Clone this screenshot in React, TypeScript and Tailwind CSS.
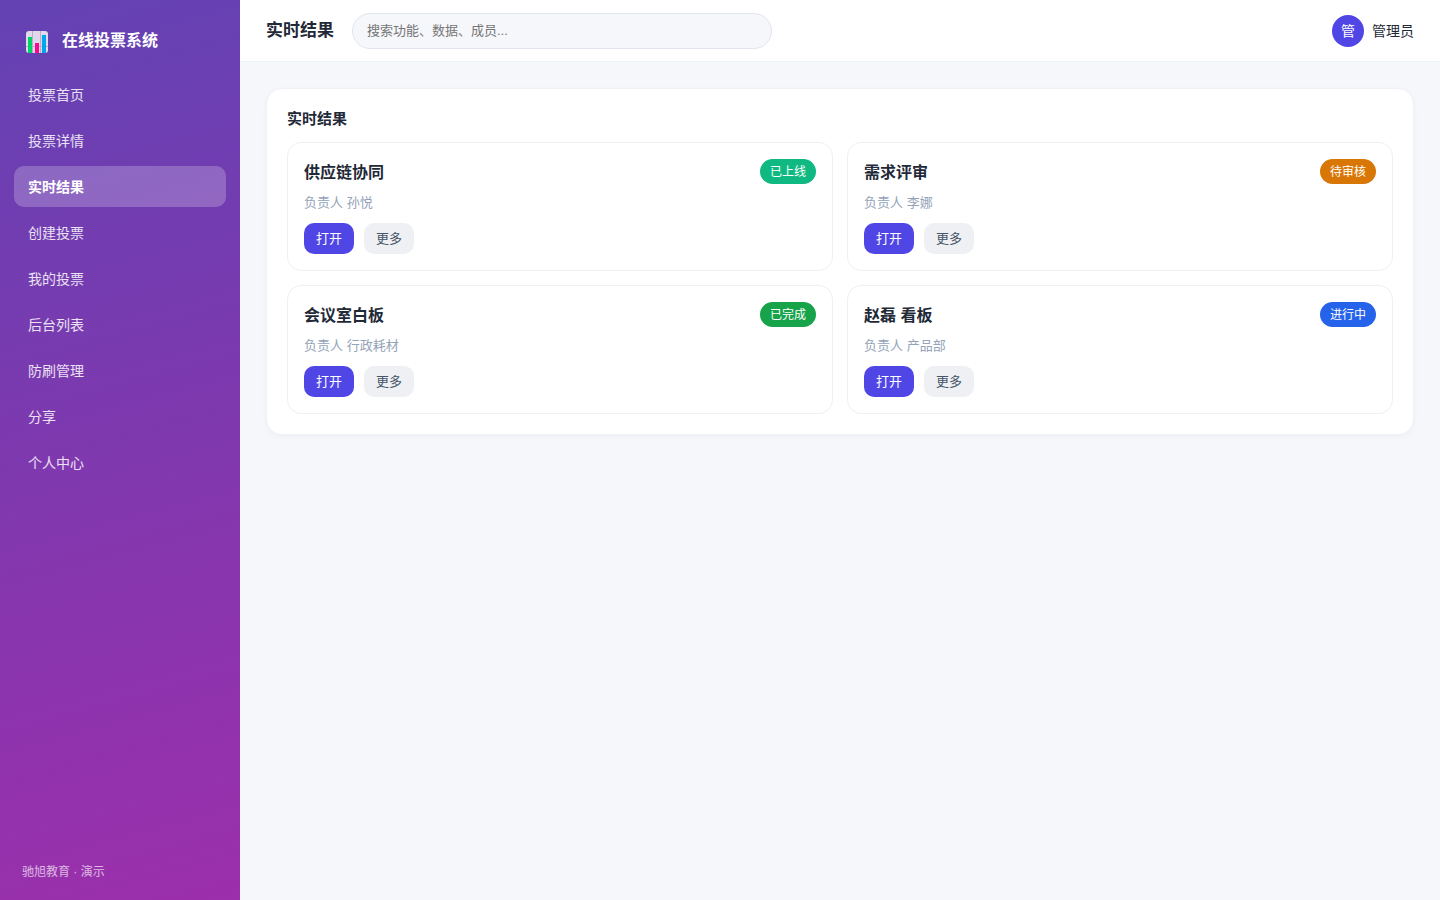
import clsx from "clsx";

interface Board {
  title: string;
  owner: string;
  status: string;
  color: string;
}

const NAV_ITEMS = [
  "投票首页",
  "投票详情",
  "实时结果",
  "创建投票",
  "我的投票",
  "后台列表",
  "防刷管理",
  "分享",
  "个人中心",
];

const BOARDS: Board[] = [
  { title: "供应链协同", owner: "孙悦", status: "已上线", color: "bg-[#10b981]" },
  { title: "需求评审", owner: "李娜", status: "待审核", color: "bg-[#d97706]" },
  { title: "会议室白板", owner: "行政耗材", status: "已完成", color: "bg-[#16a34a]" },
  { title: "赵磊 看板", owner: "产品部", status: "进行中", color: "bg-[#2563eb]" },
];

export default function App() {
  return (
    <div className="flex min-h-screen bg-[#f5f7fb] font-['Liberation_Sans','Noto_Sans_CJK_SC',sans-serif] text-[#1f2937]">
      <Sidebar active="实时结果" />
      <div className="flex-1 min-w-0">
        <Header title="实时结果" />
        <main className="p-[26px]">
          <section className="bg-white border border-[#f0f2f6] rounded-2xl p-5 shadow-[0_2px_6px_rgba(30,41,90,0.03)]">
            <h2 className="text-[15px] leading-[19px] font-bold mb-[14px]">实时结果</h2>
            <div className="grid grid-cols-2 gap-[14px]">
              {BOARDS.map((board) => (
                <BoardCard key={board.title} board={board} />
              ))}
            </div>
          </section>
        </main>
      </div>
    </div>
  );
}

// ---- Layout ----

function Sidebar({ active }: { active: string }) {
  return (
    <aside className="w-60 shrink-0 flex flex-col px-[14px] bg-[linear-gradient(165deg,#6342b3,#9c2fab)] text-white">
      <div className="flex items-center gap-[14px] h-[74px] px-3 pt-[10px]">
        <Logo />
        <span className="text-base leading-5 font-bold pb-0.5">在线投票系统</span>
      </div>
      <nav className="flex flex-col gap-[5px]">
        {NAV_ITEMS.map((item) => (
          <a
            key={item}
            href="#"
            className={clsx(
              "flex items-center h-[41px] px-[14px] rounded-[10px] text-sm",
              item === active ? "bg-white/22 font-bold" : "text-white/85"
            )}
          >
            {item}
          </a>
        ))}
      </nav>
      <p className="mt-auto px-2 pb-[19px] text-xs leading-[18px] text-white/65">驰旭教育 · 演示</p>
    </aside>
  );
}

function Header({ title }: { title: string }) {
  return (
    <header className="flex items-center h-[62px] px-[26px] gap-[18px] bg-white border-b border-[#edf0f5]">
      <h1 className="text-[17px] font-bold shrink-0">{title}</h1>
      <input
        type="search"
        aria-label="搜索"
        placeholder="搜索功能、数据、成员..."
        className="w-full max-w-[420px] h-9 px-[14px] rounded-full border border-[#e2e5ee] bg-[#f6f7fb] text-[13px] outline-none placeholder:text-[#757575]"
      />
      <div className="flex items-center gap-2 ml-auto shrink-0 text-sm">
        <span className="flex items-center justify-center w-8 h-8 rounded-full bg-[#4f46e5] text-white">
          管
        </span>
        <span>管理员</span>
      </div>
    </header>
  );
}

// ---- Helper Components ----

function BoardCard({ board }: { board: Board }) {
  return (
    <article className="border border-[#eef0f4] rounded-[14px] p-4">
      <div className="flex items-start justify-between h-[25px]">
        <h3 className="text-base leading-[27px] font-bold">{board.title}</h3>
        <span
          className={clsx(
            "h-[25px] px-[10px] rounded-full text-xs leading-[27px] text-white",
            board.color
          )}
        >
          {board.status}
        </span>
      </div>
      <p className="mt-[9px] text-[13px] leading-5 text-[#94a3b8]">负责人 {board.owner}</p>
      <div className="flex gap-[10px] mt-[10px]">
        <button className="h-[31px] px-3 rounded-[10px] bg-[#4f46e5] text-[13px] text-white">
          打开
        </button>
        <button className="h-[31px] px-3 rounded-[10px] bg-[#eef0f4] text-[13px] text-[#475569]">
          更多
        </button>
      </div>
    </article>
  );
}

function Logo() {
  return (
    <svg width="22" height="22" viewBox="0 0 22 22" shapeRendering="crispEdges" aria-hidden="true">
      <rect width="22" height="22" rx="3" fill="#e1d8ec" shapeRendering="auto" />
      <path d="M6.5 0v22M14.5 0v22M0 15.5h22" stroke="#b9aec8" />
      <rect x="2" y="6" width="4" height="16" fill="#00d26a" />
      <rect x="9" y="12" width="4" height="10" fill="#f70a8d" />
      <rect x="16" y="4" width="4" height="18" fill="#00a6ed" />
    </svg>
  );
}
